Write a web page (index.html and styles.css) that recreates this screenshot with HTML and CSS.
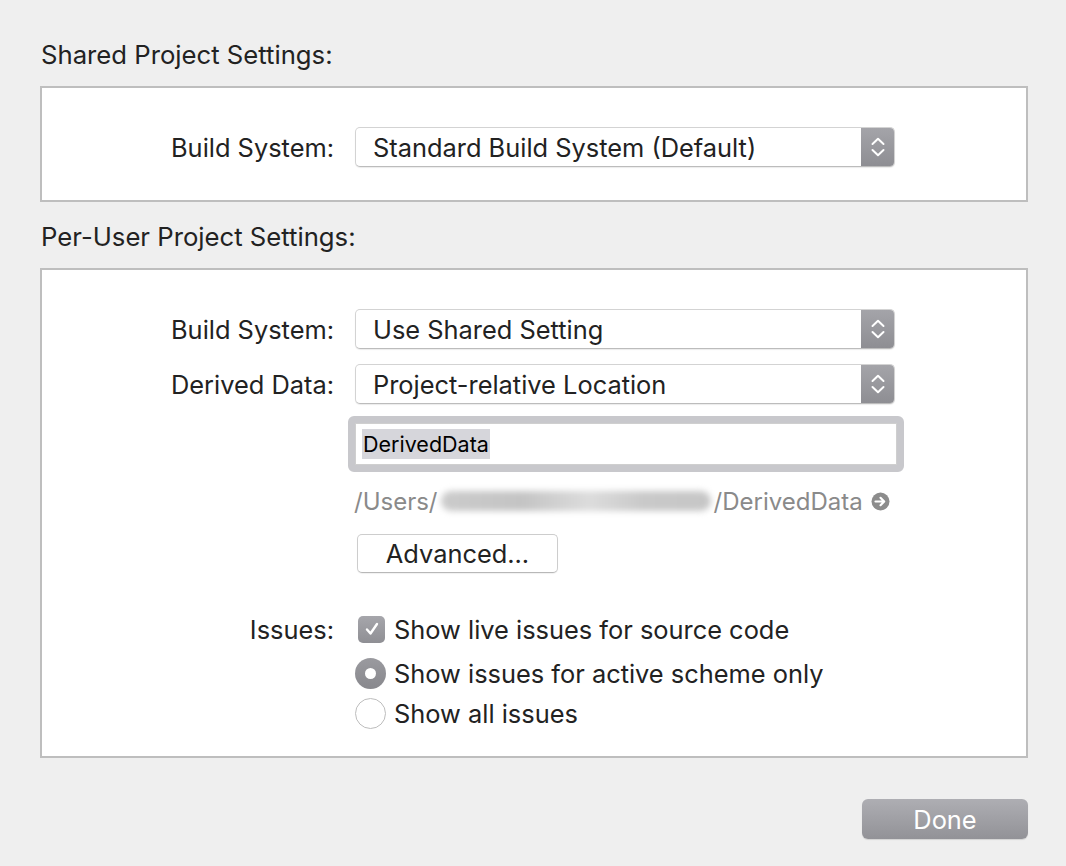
FILE: index.html
```html
<!DOCTYPE html>
<html>
<head>
<meta charset="utf-8">
<link rel="stylesheet" href="styles.css">
</head>
<body>
<div class="sheet">
  <div class="section-title">Shared Project Settings:</div>
  <div class="box box-shared">
    <div class="row">
      <div class="label">Build System:</div>
      <div class="popup">
        <span class="popup-text">Standard Build System (Default)</span>
        <span class="stepper"><svg width="16" height="24" viewBox="0 0 16 24"><path d="M2.5 9 L8 3.8 L13.5 9" fill="none" stroke="#fff" stroke-width="2" stroke-linecap="round" stroke-linejoin="round"/><path d="M2.5 15 L8 20.2 L13.5 15" fill="none" stroke="#fff" stroke-width="2" stroke-linecap="round" stroke-linejoin="round"/></svg></span>
      </div>
    </div>
  </div>

  <div class="section-title second">Per-User Project Settings:</div>
  <div class="box box-user">
    <div class="row">
      <div class="label">Build System:</div>
      <div class="popup">
        <span class="popup-text">Use Shared Setting</span>
        <span class="stepper"><svg width="16" height="24" viewBox="0 0 16 24"><path d="M2.5 9 L8 3.8 L13.5 9" fill="none" stroke="#fff" stroke-width="2" stroke-linecap="round" stroke-linejoin="round"/><path d="M2.5 15 L8 20.2 L13.5 15" fill="none" stroke="#fff" stroke-width="2" stroke-linecap="round" stroke-linejoin="round"/></svg></span>
      </div>
    </div>
    <div class="row row-derived">
      <div class="label">Derived Data:</div>
      <div class="popup">
        <span class="popup-text">Project-relative Location</span>
        <span class="stepper"><svg width="16" height="24" viewBox="0 0 16 24"><path d="M2.5 9 L8 3.8 L13.5 9" fill="none" stroke="#fff" stroke-width="2" stroke-linecap="round" stroke-linejoin="round"/><path d="M2.5 15 L8 20.2 L13.5 15" fill="none" stroke="#fff" stroke-width="2" stroke-linecap="round" stroke-linejoin="round"/></svg></span>
      </div>
    </div>
    <div class="row row-field">
      <div class="label"></div>
      <div class="field-ring">
        <div class="field"><span class="selected">DerivedData</span></div>
      </div>
    </div>
    <div class="row row-path">
      <div class="label"></div>
      <div class="path">
        <span>/Users/</span><span class="blur-wrap"><span class="blur"></span></span><span>/DerivedData</span>
        <svg class="reveal" width="19" height="19" viewBox="0 0 19 19"><circle cx="9.5" cy="9.5" r="9" fill="#8c8c8c"/><path d="M4.5 9.5 H13 M9.5 5.8 L13.2 9.5 L9.5 13.2" fill="none" stroke="#fff" stroke-width="2.2" stroke-linecap="round" stroke-linejoin="round"/></svg>
      </div>
    </div>
    <div class="row row-adv">
      <div class="label"></div>
      <div class="button">Advanced...</div>
    </div>
    <div class="row row-issues">
      <div class="label">Issues:</div>
      <div class="option">
        <span class="checkbox"><svg width="18" height="18" viewBox="0 0 18 18"><path d="M4 9.5 L7.5 13.5 L14 4" fill="none" stroke="#fff" stroke-width="2.4" stroke-linecap="round" stroke-linejoin="round"/></svg></span>
        <span>Show live issues for source code</span>
      </div>
    </div>
    <div class="row row-radio1">
      <div class="label"></div>
      <div class="option">
        <span class="radio on"><span class="dot"></span></span>
        <span>Show issues for active scheme only</span>
      </div>
    </div>
    <div class="row row-radio2">
      <div class="label"></div>
      <div class="option">
        <span class="radio"></span>
        <span>Show all issues</span>
      </div>
    </div>
  </div>

  <div class="footer">
    <div class="done">Done</div>
  </div>
</div>
</body>
</html>
```

FILE: styles.css
```css
html, body {
  margin: 0;
  padding: 0;
  background: #efefef;
}
body {
  font-family: Inter, "Helvetica Neue", "Liberation Sans", sans-serif;
  font-size: 25.4px;
  color: #222;
  width: 1066px;
  height: 866px;
  overflow: hidden;
}
.sheet {
  padding: 41px 38px 0 40px;
}
.section-title {
  height: 28px;
  line-height: 28px;
  padding-left: 1px;
  margin-bottom: 17px;
  font-size: 25.7px;
}
.section-title.second {
  margin-top: 21px;
}
.box {
  background: #fff;
  border: 2px solid #bebebe;
  width: 984px;
}
.box-shared {
  padding: 39px 0 33px;
}
.box-user {
  padding: 39px 0 29px;
}
.row {
  display: flex;
  align-items: center;
}
.label {
  width: 292px;
  margin-right: 21px;
  text-align: right;
  flex: none;
}
.popup {
  width: 538px;
  height: 38px;
  border: 1px solid #d3d3d3;
  border-bottom-color: #bcbcbc;
  border-radius: 5px;
  box-shadow: 0 1px 1px rgba(0,0,0,0.08);
  display: flex;
  align-items: center;
  background: #fff;
  overflow: hidden;
}
.popup-text {
  flex: 1;
  padding-left: 17px;
}
.stepper {
  width: 33px;
  height: 38px;
  background: linear-gradient(#a4a4a9, #8e8e93);
  display: flex;
  align-items: center;
  justify-content: center;
}
.row-derived { margin-top: 15px; }
.row-field { margin-top: 12px; }
.field-ring {
  margin-left: -7px;
  width: 542px;
  height: 42px;
  border: 7px solid #c8c8cc;
  border-radius: 6px;
  background: #fff;
}
.field {
  border: 1px solid #cfcfcf;
  display: flex;
  align-items: center;
  padding-left: 6px;
  font-size: 21.5px;
  color: #000;
  box-sizing: border-box;
  height: 42px;
}
.selected {
  background: #d6d6db;
  padding: 2px 1px;
  line-height: 26px;
}
.row-path { margin-top: 15px; height: 28px; }
.path {
  display: flex;
  align-items: center;
  color: #8a8a8a;
  margin-left: -1px;
  font-size: 24px;
}
.blur-wrap {
  width: 276px;
  height: 28px;
  display: inline-flex;
  align-items: center;
}
.blur {
  display: block;
  width: 270px;
  height: 20px;
  margin-left: 3px;
  border-radius: 10px;
  background: linear-gradient(90deg, #cbcbcb, #c4c4c4 30%, #dcdcdc 55%, #c9c9c9 75%, #c6c6c6);
  filter: blur(3px);
}
.reveal { margin-left: 8px; }
.row-adv { margin-top: 19px; }
.button {
  margin-left: 2px;
  width: 199px;
  height: 37px;
  border: 1px solid #cdcdcd;
  border-bottom-color: #b8b8b8;
  border-radius: 5px;
  background: #fff;
  box-shadow: 0 1px 1px rgba(0,0,0,0.06);
  display: flex;
  align-items: center;
  justify-content: center;
}
.row-issues { margin-top: 42px; height: 28px; }
.row-radio1 { margin-top: 16px; height: 28px; }
.row-radio2 { margin-top: 12px; height: 28px; }
.option {
  display: flex;
  align-items: center;
}
.checkbox {
  margin-left: 3px;
  width: 27px;
  height: 27px;
  border-radius: 5px;
  background: linear-gradient(#a6a6ab, #8f8f94);
  display: flex;
  align-items: center;
  justify-content: center;
  margin-right: 9px;
}
.radio {
  box-sizing: border-box;
  width: 31px;
  height: 31px;
  border-radius: 50%;
  border: 1px solid #bdbdbd;
  background: #fff;
  margin-right: 8px;
  display: flex;
  align-items: center;
  justify-content: center;
}
.radio.on {
  border: none;
  background: linear-gradient(#9a9a9f, #88888d);
}
.dot {
  width: 11px;
  height: 11px;
  border-radius: 50%;
  background: #fff;
}
.footer {
  display: flex;
  justify-content: flex-end;
  margin-top: 41px;
  width: 988px;
}
.done {
  width: 166px;
  height: 40px;
  border-radius: 6px;
  background: linear-gradient(#aeaeb3, #929297);
  box-shadow: 0 1px 1px rgba(0,0,0,0.12);
  color: #fff;
  display: flex;
  align-items: center;
  justify-content: center;
}
```
